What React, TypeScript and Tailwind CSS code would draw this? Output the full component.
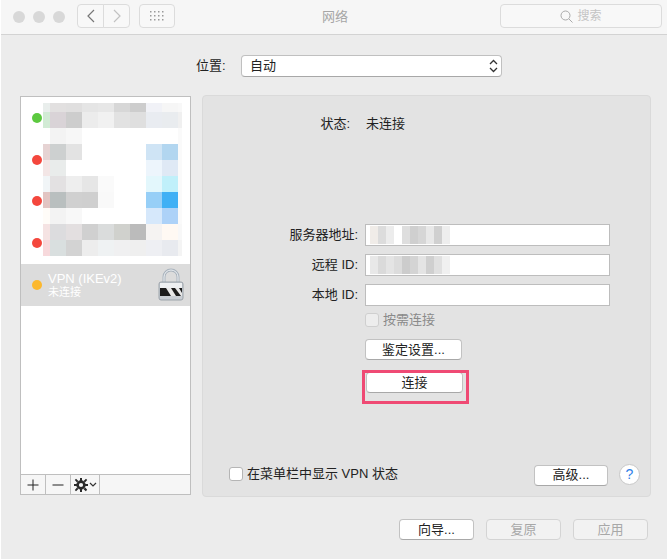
import { Fragment } from 'react';

const font = "font-['Liberation_Sans','Noto_Sans_CJK_SC',sans-serif]";

// blurred network names, row by row (first and last column are narrow)
const mosaic = [
  ['bg-[#e9eeec]', 'bg-[#e2e0e0]', 'bg-[#e0dfdf]', 'bg-[#e5e5e5]', 'bg-[#e7e7e7]', 'bg-[#d7d7d7]', 'bg-[#cdcdcd]', 'bg-[#f1f2f7]', 'bg-[#f6f6f6]', 'bg-[#f8f8f8]'],
  ['bg-[#d2ebd5]', 'bg-[#d9d3d7]', 'bg-[#cdcdcd]', 'bg-[#ececec]', 'bg-[#f1f1f1]', 'bg-[#e2e2e2]', 'bg-[#dfdfdf]', 'bg-[#e9ecf1]', 'bg-[#e9ecef]', 'bg-[#f0f0f0]'],
  ['bg-white', 'bg-[#f3f3f3]', 'bg-[#f7f7f7]', 'bg-white', 'bg-white', 'bg-white', 'bg-white', 'bg-white', 'bg-white', 'bg-[#fafafa]'],
  ['bg-[#e6d3d3]', 'bg-[#cdd0d0]', 'bg-[#e3e3e3]', 'bg-white', 'bg-white', 'bg-white', 'bg-white', 'bg-[#cfe4f5]', 'bg-[#b2d6f0]', 'bg-[#fafafa]'],
  ['bg-[#f3e6e6]', 'bg-[#e9eceb]', 'bg-white', 'bg-white', 'bg-white', 'bg-white', 'bg-white', 'bg-[#edf5fc]', 'bg-[#dfe9f5]', 'bg-[#fafafa]'],
  ['bg-[#f1f5f7]', 'bg-[#e3e1e2]', 'bg-[#eeeeee]', 'bg-[#e6e6e6]', 'bg-[#fafafa]', 'bg-white', 'bg-white', 'bg-[#e3f7fc]', 'bg-[#c0f0fa]', 'bg-[#fafafa]'],
  ['bg-[#e2c5c3]', 'bg-[#b9bfbf]', 'bg-[#d0d0d0]', 'bg-[#cfcfcf]', 'bg-[#f9f9f9]', 'bg-white', 'bg-white', 'bg-[#97cff7]', 'bg-[#40b0f5]', 'bg-[#fafafa]'],
  ['bg-[#fffcf8]', 'bg-[#f3f3f3]', 'bg-[#f8f8f8]', 'bg-white', 'bg-white', 'bg-white', 'bg-white', 'bg-[#d6e8fb]', 'bg-[#add2f8]', 'bg-[#fafafa]'],
  ['bg-[#f5e3e3]', 'bg-[#dcdcde]', 'bg-[#e3dfe0]', 'bg-[#d0d0d0]', 'bg-[#dadcdc]', 'bg-[#d0d1cd]', 'bg-[#bbbbbb]', 'bg-[#f5f3f2]', 'bg-[#fff9f3]', 'bg-[#f8f8f8]'],
  ['bg-[#f7d9dc]', 'bg-[#d9dfdf]', 'bg-[#d3d3d3]', 'bg-[#ededed]', 'bg-[#eff2f3]', 'bg-[#f0f0f1]', 'bg-[#efefef]', 'bg-[#eeeff3]', 'bg-[#e8eaef]', 'bg-[#f4f4f4]'],
];

const rowHeights = ['h-[9px]', 'h-4', 'h-4', 'h-4', 'h-4', 'h-4', 'h-4', 'h-4', 'h-4', 'h-4'];

const Btn = ({ label, width, disabled }: { label: string; width: string; disabled?: boolean }) => (
  <button
    className={`h-[21px] ${width} rounded-[4px] border text-[13px] leading-[18px] ${
      disabled
        ? 'border-[#d4d4d4] bg-[#f2f2f2] text-[#a8a8a8]'
        : 'border-[#c2c2c2] border-b-[#a8a8a8] bg-white text-[#222]'
    }`}
  >
    {label}
  </button>
);

const Field = ({ label, blur }: { label: string; blur?: string[] }) => (
  <div className="flex items-center">
    <span className="w-[162px] pr-[7px] text-right text-[13px] text-[#222]">{label}</span>
    <div className="flex h-[22px] w-[245px] items-center border border-[#bdbdbd] bg-white pl-1">
      {blur && (
        <div className="flex h-[18px]">
          {blur.map((c, i) => (
            <div key={i} className={`w-2 ${c}`} />
          ))}
        </div>
      )}
    </div>
  </div>
);

const Dot = ({ color }: { color: string }) => (
  <span className={`ml-2 h-[10px] w-[10px] rounded-full ${color}`} />
);

const Lock = () => (
  <svg width="26" height="34" viewBox="0 0 26 34">
    <path d="M6 15V9a7 7 0 0 1 14 0v6" fill="none" stroke="#a9b3bd" strokeWidth="3" />
    <path d="M6 15V9a7 7 0 0 1 14 0v6" fill="none" stroke="#eef1f4" strokeWidth="1" />
    <rect x="1" y="14" width="24" height="18" rx="2" fill="#c9ced4" stroke="#8e979f" strokeWidth="0.8" />
    <rect x="2" y="15" width="22" height="5" fill="#eef0f2" />
    <rect x="2" y="20" width="22" height="8" fill="#1c1c1c" />
    <path d="M8 20h5l5 8h-5zM17 20h4l3 5v3h-1z" fill="#e8e8e8" />
  </svg>
);

export default function App() {
  return (
    <div className={`${font} h-[559px] w-[670px] bg-white pl-px`}>
      <div className="flex h-full w-[666px] flex-col bg-[#ececec]">
        {/* title bar */}
        <div className="relative flex h-[35px] shrink-0 items-start border-b border-[#d3d3d3] bg-[#f6f6f6] pl-3 pt-1">
          <div className="mt-[7px] flex gap-2">
            <span className="h-3 w-3 rounded-full bg-[#d8d8d8]" />
            <span className="h-3 w-3 rounded-full bg-[#d8d8d8]" />
            <span className="h-3 w-3 rounded-full bg-[#d8d8d8]" />
          </div>
          <div className="ml-3 flex h-6">
            <div className="flex w-[27px] items-center justify-center rounded-l-[4px] border border-[#dcdcdc] bg-[#f8f8f8]">
              <svg width="10" height="14" viewBox="0 0 10 14" fill="none" stroke="#777" strokeWidth="1.2">
                <path d="M8 1 2 7l6 6" />
              </svg>
            </div>
            <div className="-ml-px flex w-[27px] items-center justify-center rounded-r-[4px] border border-[#dcdcdc] bg-[#f8f8f8]">
              <svg width="10" height="14" viewBox="0 0 10 14" fill="none" stroke="#c2c2c2" strokeWidth="1.2">
                <path d="m2 1 6 6-6 6" />
              </svg>
            </div>
          </div>
          <div className="ml-[9px] flex h-6 w-9 items-center justify-center rounded-[4px] border border-[#dcdcdc] bg-[#f8f8f8]">
            <svg width="16" height="12" viewBox="0 0 16 12" fill="#9a9a9a">
              {[1, 5, 9].map((y) => (
                <Fragment key={y}>
                  {[1, 5, 9, 13].map((x) => (
                    <rect key={x} x={x} y={y} width="1.5" height="1.5" />
                  ))}
                </Fragment>
              ))}
            </svg>
          </div>
          <span className="ml-[147px] mt-[3px] text-[13px] text-[#a6a6a6]">网络</span>
          <div className="ml-auto mr-[5px] flex h-6 w-[162px] items-center justify-center gap-1 rounded-[4px] border border-[#dcdcdc] bg-[#f8f8f8]">
            <svg width="13" height="13" viewBox="0 0 13 13" fill="none" stroke="#aaa" strokeWidth="1">
              <circle cx="5.5" cy="5.5" r="4.5" />
              <path d="m9 9 3.5 3.5" />
            </svg>
            <span className="text-[12px] text-[#c4c4c4]">搜索</span>
          </div>
        </div>

        {/* location */}
        <div className="mt-5 flex h-[22px] shrink-0 items-center pl-[195px]">
          <span className="w-[45px] text-[13px] text-[#222]">位置:</span>
          <div className="flex h-[22px] w-[261px] items-center justify-between rounded-[4px] border border-[#c0c0c0] border-b-[#a8a8a8] bg-white pl-2 pr-[3px]">
            <span className="text-[13px] text-[#222]">自动</span>
            <svg width="9" height="14" viewBox="0 0 9 14" fill="none" stroke="#333" strokeWidth="1.3">
              <path d="M1 5l3.5-3.5L8 5M1 9l3.5 3.5L8 9" />
            </svg>
          </div>
        </div>

        <div className="mt-[18px] flex h-[403px] shrink-0 items-start pl-[19px]">
          {/* service list */}
          <div className="mt-px flex h-[399px] w-[171px] flex-col border border-[#bfbfbf] bg-white">
            <div className="relative flex-1">
              {['bg-[#5cc93f]', 'bg-[#f4473d]', 'bg-[#f4473d]', 'bg-[#f4473d]'].map((c, i) => (
                <div key={i} className="flex h-[41.7px] items-center pl-[3px]">
                  <Dot color={c} />
                </div>
              ))}
              <div className="flex h-[42px] items-center bg-[#dcdcdc] pl-[3px]">
                <Dot color="bg-[#fcb82e]" />
                <div className="ml-[6px] flex flex-1 flex-col text-white">
                  <span className="text-[13px] leading-[15px]">VPN (IKEv2)</span>
                  <span className="text-[11px] leading-[13px]">未连接</span>
                </div>
                <div className="mr-[6px]">
                  <Lock />
                </div>
              </div>
              <div className="absolute left-[22px] top-[6px] flex w-[141px] flex-col overflow-hidden">
                {mosaic.map((row, r) => (
                  <div key={r} className={`flex ${rowHeights[r]}`}>
                    {row.map((c, i) => (
                      <div key={i} className={`${i === 0 ? 'w-[7px]' : i === 9 ? 'w-[4px]' : 'w-4'} ${c}`} />
                    ))}
                  </div>
                ))}
              </div>
            </div>
            <div className="flex h-5 shrink-0 border-t border-[#bfbfbf] bg-[#f6f6f6] text-[#222]">
              <div className="flex w-[25px] items-center justify-center border-r border-[#bfbfbf]">
                <svg width="12" height="12" viewBox="0 0 12 12" stroke="#222" strokeWidth="1">
                  <path d="M6 .5v11M.5 6h11" />
                </svg>
              </div>
              <div className="flex w-[25px] items-center justify-center border-r border-[#bfbfbf]">
                <svg width="12" height="12" viewBox="0 0 12 12" stroke="#222" strokeWidth="1">
                  <path d="M.5 6h11" />
                </svg>
              </div>
              <div className="flex w-[29px] items-center justify-center gap-[1px] border-r border-[#bfbfbf]">
                <svg width="14" height="14" viewBox="0 0 14 14">
                  <circle cx="7" cy="7" r="3.4" fill="none" stroke="#2a2a2a" strokeWidth="2.6" />
                  <path
                    d="M6 0h2v3H6zM6 11h2v3H6zM0 6h3v2H0zM11 6h3v2h-3zM2 .8 4.4 3 3 4.4.8 2zM11.2 9.6l2 2.2-1.4 1.4-2.2-2zM.8 12 3 9.6 4.4 11l-2.4 2.2zM9.6 3 12 .8 13.2 2 11 4.4z"
                    fill="#2a2a2a"
                  />
                </svg>
                <svg width="8" height="6" viewBox="0 0 8 6" fill="none" stroke="#333" strokeWidth="1.2">
                  <path d="m1 1 3 3 3-3" />
                </svg>
              </div>
            </div>
          </div>

          {/* detail panel */}
          <div className="relative ml-[11px] flex h-[402px] w-[449px] flex-col rounded-[4px] border border-[#dadada] bg-[#e3e3e3]">
            <div className="mt-[18px] flex">
              <span className="w-[147px] text-right text-[13px] text-[#222]">状态:</span>
              <span className="ml-4 text-[13px] text-[#222]">未连接</span>
            </div>
            <div className="mt-[90px] flex flex-col gap-2">
              <Field
                label="服务器地址:"
                blur={['bg-[#f0ece8]', 'bg-[#dcdcdc]', 'bg-[#ececec]', 'bg-white', 'bg-[#dedede]', 'bg-[#cfcfcf]', 'bg-[#d6d6d6]', 'bg-[#e8e8e8]', 'bg-[#d0d0d0]', 'bg-[#eeeeee]']}
              />
              <Field
                label="远程 ID:"
                blur={['bg-[#e8e8e8]', 'bg-[#dadada]', 'bg-[#e4e4e4]', 'bg-[#dcdcdc]', 'bg-[#cccccc]', 'bg-[#d4d4d4]', 'bg-[#e4e4e4]', 'bg-[#cfcfcf]', 'bg-[#e0e0e0]', 'bg-[#f0f0f0]']}
              />
              <Field label="本地 ID:" />
            </div>
            <div className="ml-[162px] mt-[7px] flex h-[15px] items-center gap-1">
              <span className="h-[14px] w-[14px] rounded-[3px] border border-[#cfcfcf] bg-[#ededed]" />
              <span className="text-[13px] text-[#8a8a8a]">按需连接</span>
            </div>
            <div className="ml-[162px] mt-[9px]">
              <Btn label="鉴定设置..." width="w-[97px]" />
            </div>
            <div className="ml-[163px] mt-[9px]">
              <Btn label="连接" width="w-[97px]" />
            </div>
            <div className="absolute left-[159px] top-[274px] h-[34px] w-[107px] border-[3px] border-[#ef4a74]" />
            <div className="mt-auto mb-[10px] flex items-center pl-[26px]">
              <span className="h-[14px] w-[14px] rounded-[3px] border border-[#b5b5b5] bg-white" />
              <span className="ml-1 text-[13px] text-[#222]">在菜单栏中显示 VPN 状态</span>
              <div className="ml-auto">
                <Btn label="高级..." width="w-[74px]" />
              </div>
              <span className="ml-[11px] mr-[10px] flex h-[21px] w-[21px] items-center justify-center rounded-full border border-[#c8c8c8] bg-white text-[14px] text-[#2f7fe8]">
                ?
              </span>
            </div>
          </div>
        </div>

        {/* bottom buttons */}
        <div className="mt-[21px] flex gap-[12px] pl-[398px]">
          <Btn label="向导..." width="w-[75px]" />
          <Btn label="复原" width="w-[75px]" disabled />
          <Btn label="应用" width="w-[75px]" disabled />
        </div>
      </div>
    </div>
  );
}
